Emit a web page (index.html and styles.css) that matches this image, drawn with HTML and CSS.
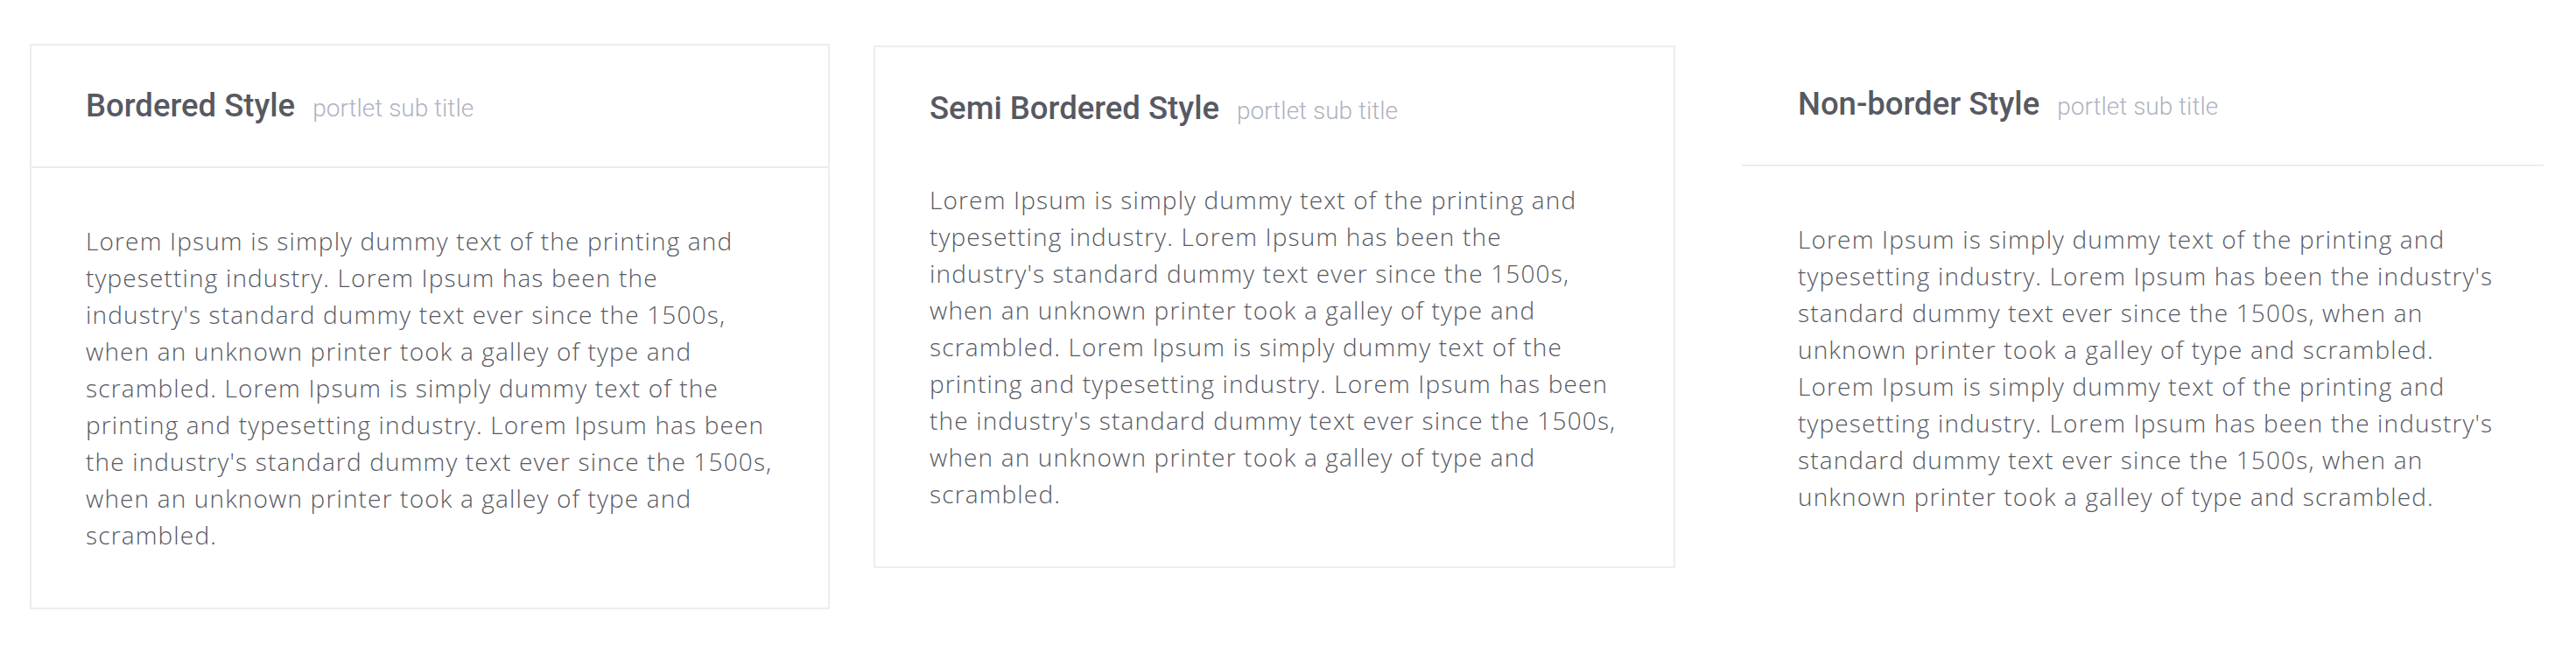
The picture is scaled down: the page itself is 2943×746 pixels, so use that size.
FILE: index.html
```html
<!DOCTYPE html>
<html lang="en">
<head>
<meta charset="utf-8">
<title>Portlet styles</title>
<link rel="stylesheet" href="styles.css">
</head>
<body>
<div class="row">
  <div class="portlet portlet--bordered">
    <div class="portlet__head">
      <h3 class="portlet__title">Bordered Style</h3>
      <small class="portlet__sub">portlet sub title</small>
    </div>
    <div class="portlet__body">
      <p class="portlet__text">Lorem Ipsum is simply dummy text of the printing and typesetting industry. Lorem Ipsum has been the industry's standard dummy text ever since the 1500s, when an unknown printer took a galley of type and scrambled. Lorem Ipsum is simply dummy text of the printing and typesetting industry. Lorem Ipsum has been the industry's standard dummy text ever since the 1500s, when an unknown printer took a galley of type and scrambled.</p>
    </div>
  </div>

  <div class="portlet portlet--semi">
    <div class="portlet__head">
      <h3 class="portlet__title">Semi Bordered Style</h3>
      <small class="portlet__sub">portlet sub title</small>
    </div>
    <div class="portlet__body">
      <p class="portlet__text">Lorem Ipsum is simply dummy text of the printing and typesetting industry. Lorem Ipsum has been the industry's standard dummy text ever since the 1500s, when an unknown printer took a galley of type and scrambled. Lorem Ipsum is simply dummy text of the printing and typesetting industry. Lorem Ipsum has been the industry's standard dummy text ever since the 1500s, when an unknown printer took a galley of type and scrambled.</p>
    </div>
  </div>

  <div class="portlet portlet--plain">
    <div class="portlet__head">
      <h3 class="portlet__title">Non-border Style</h3>
      <small class="portlet__sub">portlet sub title</small>
    </div>
    <div class="portlet__body">
      <p class="portlet__text portlet__text--wide">Lorem Ipsum is simply dummy text of the printing and typesetting industry. Lorem Ipsum has been the industry's standard dummy text ever since the 1500s, when an unknown printer took a galley of type and scrambled. Lorem Ipsum is simply dummy text of the printing and typesetting industry. Lorem Ipsum has been the industry's standard dummy text ever since the 1500s, when an unknown printer took a galley of type and scrambled.</p>
    </div>
  </div>
</div>
</body>
</html>
```

FILE: styles.css
```css
* { box-sizing: border-box; }

html, body {
  margin: 0;
  padding: 0;
  background: #ffffff;
}

body {
  font-family: "Open Sans", "Noto Sans", sans-serif;
  color: #575962;
}

.row {
  display: flex;
  align-items: flex-start;
  padding: 50px 0 0 34px;
}

.portlet {
  background: #ffffff;
  flex: none;
}

.portlet--bordered {
  width: 914px;
  border: 2px solid #ebedf2;
  margin-right: 50px;
}

.portlet--semi {
  width: 916px;
  border: 2px solid #ebedf2;
  margin-top: 2px;
  margin-right: 76px;
}

.portlet--plain {
  width: 916px;
}

.portlet__head {
  height: 140px;
  display: flex;
  align-items: baseline;
  padding: 0 62px;
  align-content: center;
  flex-wrap: wrap;
}

.portlet--bordered .portlet__head {
  border-bottom: 2px solid #ebedf2;
}

.portlet--plain .portlet__head {
  border-bottom: 2px solid #ebedf2;
  padding: 0 64px;
}

.portlet__title {
  margin: 0;
  font-family: Roboto, "Liberation Sans", sans-serif;
  font-weight: 500;
  font-size: 36.5px;
  line-height: 1.2;
  color: #575962;
}

.portlet__sub {
  margin-left: 20px;
  font-family: Roboto, "Liberation Sans", sans-serif;
  font-weight: 300;
  font-size: 28px;
  color: #afb2c1;
}

.portlet__body {
  padding: 62px;
}

.portlet--semi .portlet__body {
  padding-top: 13px;
}

.portlet--plain .portlet__body {
  padding: 62px 20px 62px 64px;
}

.portlet__text {
  margin: 0;
  font-size: 28px;
  font-weight: 300;
  letter-spacing: 1.15px;
  line-height: 42px;
  width: 786px;
}

.portlet__text--wide {
  width: 812px;
}
```
